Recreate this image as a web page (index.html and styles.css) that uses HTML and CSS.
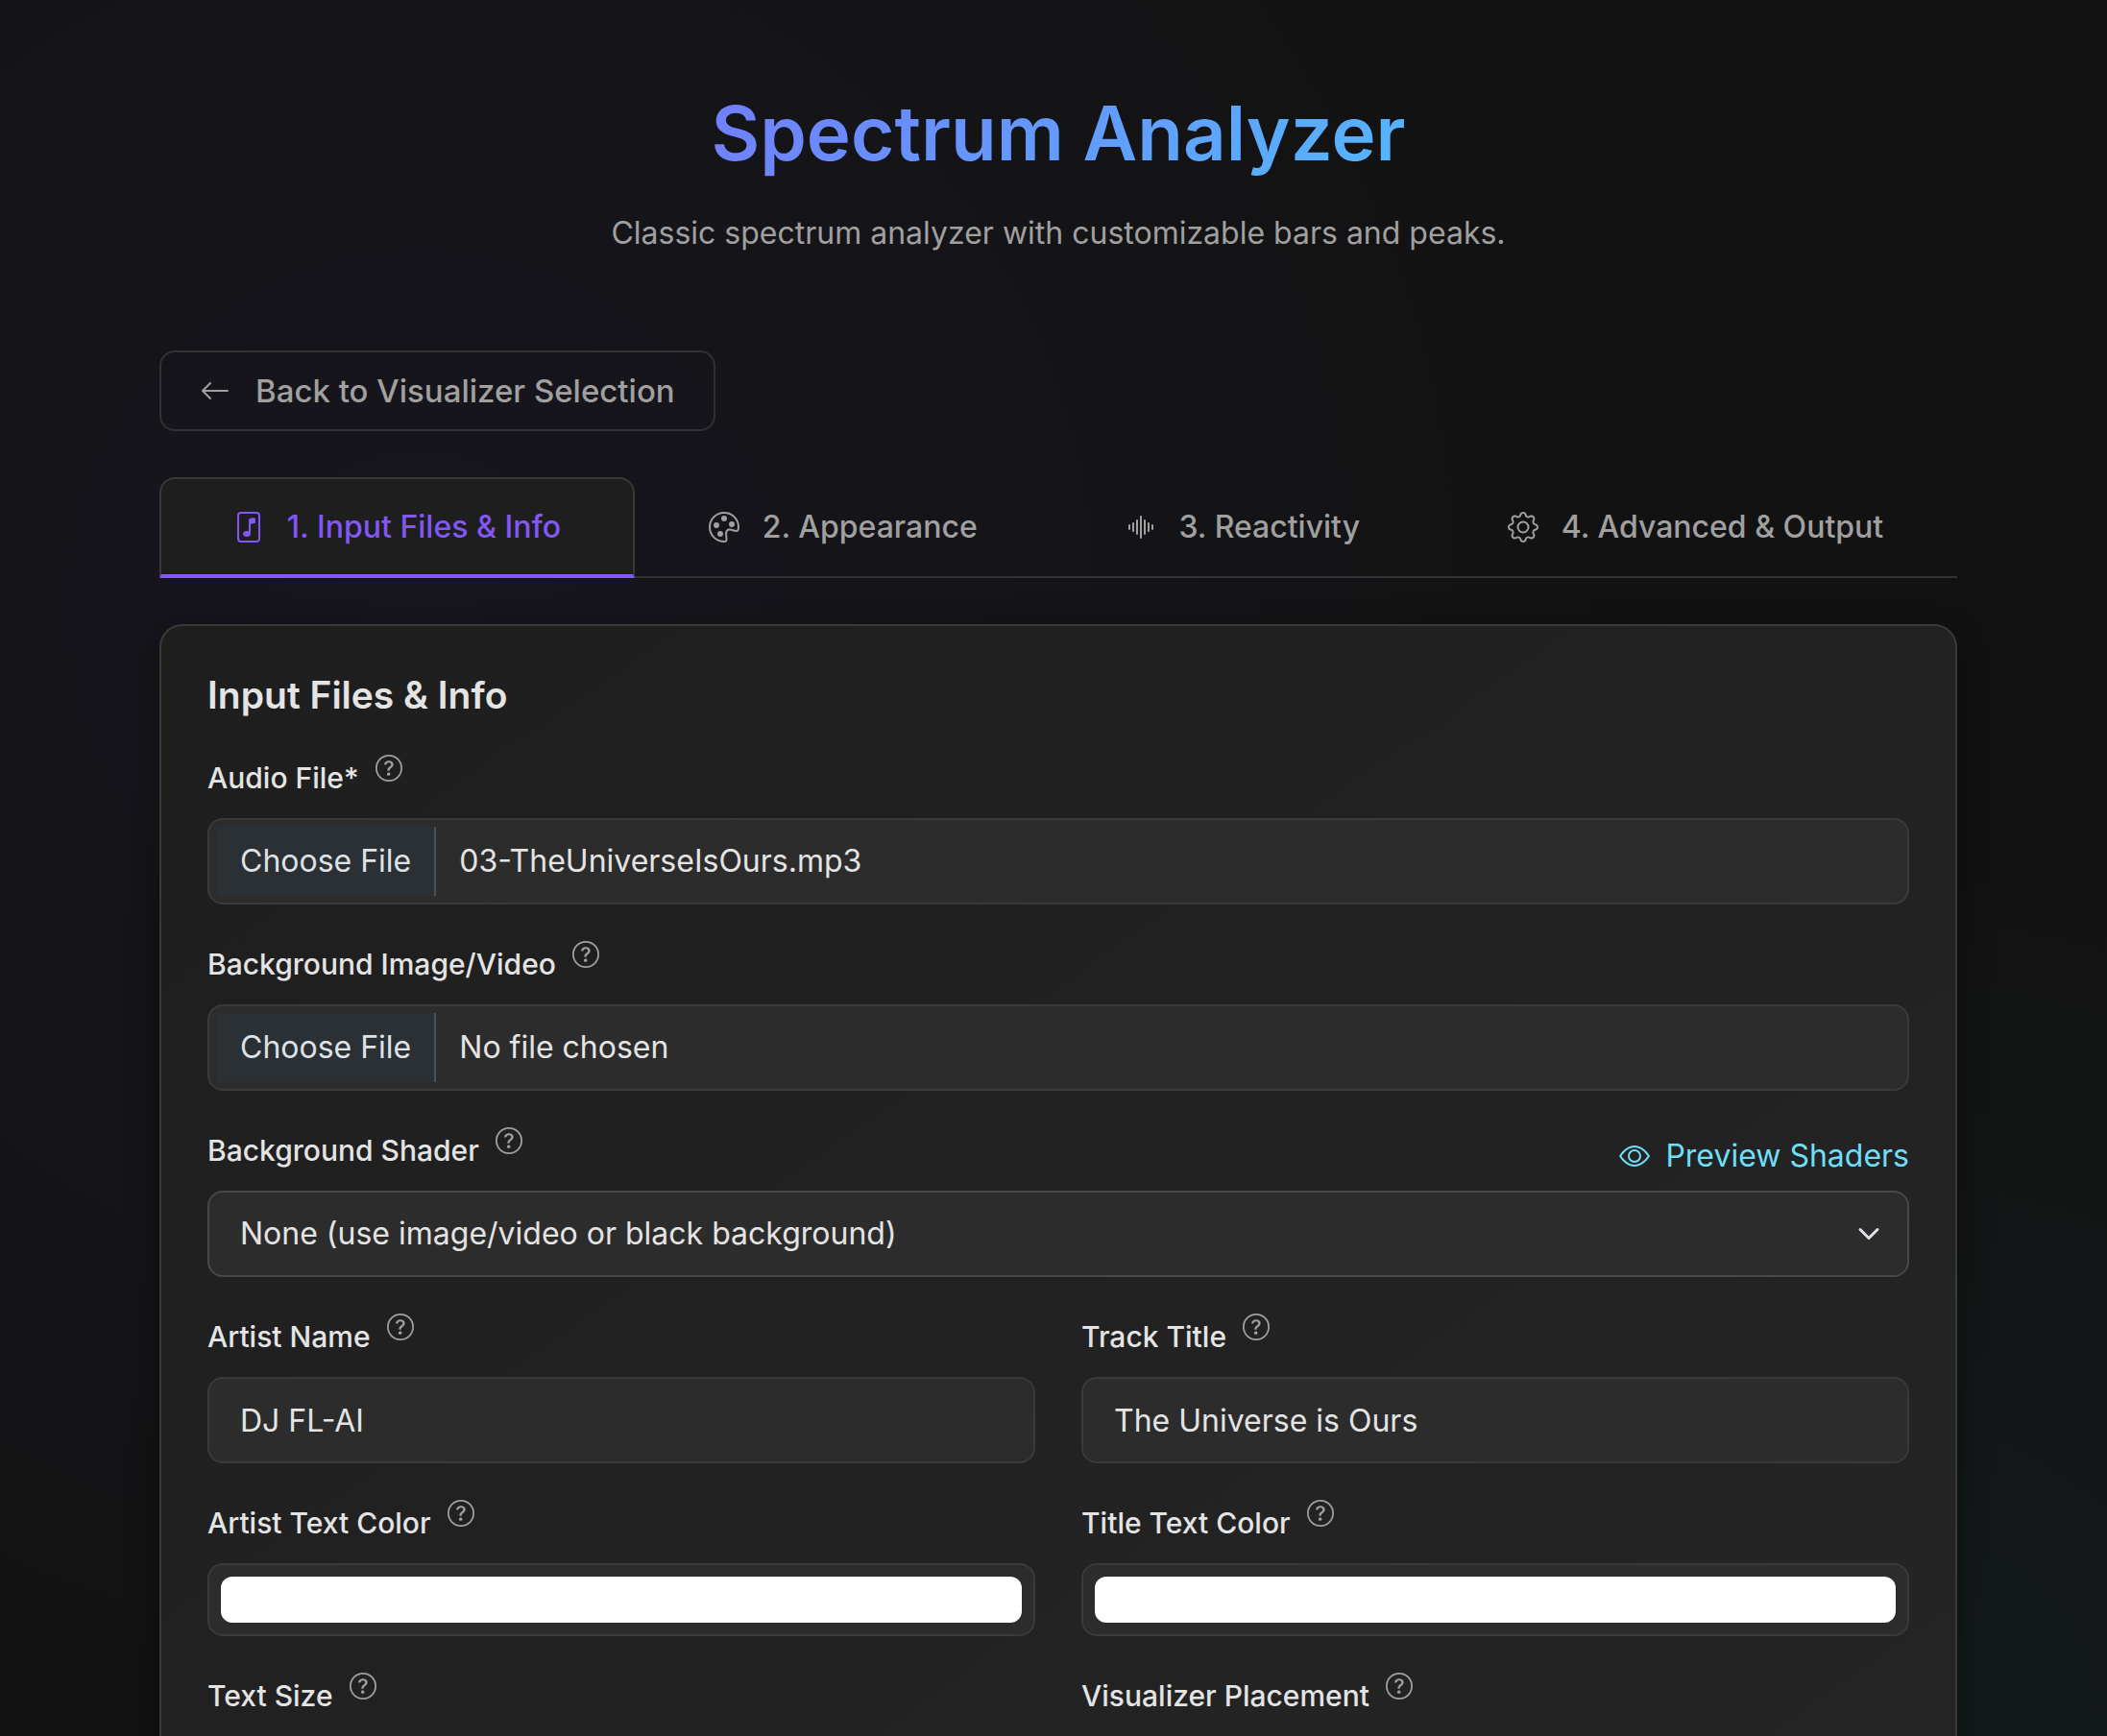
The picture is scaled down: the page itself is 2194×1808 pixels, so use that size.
FILE: index.html
```html
<!DOCTYPE html>
<html lang="en">
<head>
  <meta charset="UTF-8">
  <meta name="viewport" content="width=device-width, initial-scale=1">
  <title>Spectrum Analyzer</title>
  <link rel="stylesheet" href="styles.css">
</head>
<body>
  <!-- Shared icon shapes -->
  <svg class="icon-defs" aria-hidden="true">
    <symbol id="icon-help" viewBox="0 0 16 16">
      <path d="M8 15A7 7 0 1 1 8 1a7 7 0 0 1 0 14m0 1A8 8 0 1 0 8 0a8 8 0 0 0 0 16"/>
      <path d="M5.255 5.786a.237.237 0 0 0 .241.247h.825c.138 0 .248-.113.266-.25.09-.656.54-1.134 1.342-1.134.686 0 1.314.343 1.314 1.168 0 .635-.374.927-.965 1.371-.673.489-1.206 1.06-1.168 1.987l.003.217a.25.25 0 0 0 .25.246h.811a.25.25 0 0 0 .25-.25v-.105c0-.718.273-.927 1.01-1.486.609-.463 1.244-.977 1.244-2.056 0-1.511-1.276-2.241-2.673-2.241-1.267 0-2.655.59-2.75 2.286m1.557 5.763c0 .533.425.927 1.01.927.609 0 1.028-.394 1.028-.927 0-.552-.42-.94-1.029-.94-.584 0-1.009.388-1.009.94"/>
    </symbol>
  </svg>

  <div class="container">
    <header class="page-header">
      <h1>Spectrum Analyzer</h1>
      <p>Classic spectrum analyzer with customizable bars and peaks.</p>
    </header>

    <a href="#" class="back-button">
      <svg class="icon" viewBox="0 0 16 16"><path d="M15 8a.5.5 0 0 0-.5-.5H2.707l3.147-3.146a.5.5 0 1 0-.708-.708l-4 4a.5.5 0 0 0 0 .708l4 4a.5.5 0 0 0 .708-.708L2.707 8.5H14.5A.5.5 0 0 0 15 8"/></svg>
      Back to Visualizer Selection
    </a>

    <div class="tabs" role="tablist">
      <button type="button" class="tab active" role="tab" aria-selected="true">
        <svg class="icon" viewBox="0 0 16 16">
          <path d="M10.304 3.13a1 1 0 0 1 1.196.98v1.8l-2.5.5v5.09c0 .495-.301.883-.662 1.123C7.974 12.866 7.499 13 7 13s-.974-.134-1.338-.377C5.302 12.383 5 11.995 5 11.5s.301-.883.662-1.123C6.026 10.134 6.501 10 7 10c.356 0 .7.068 1 .196V4.41a1 1 0 0 1 .804-.98z"/>
          <path d="M4 0a2 2 0 0 0-2 2v12a2 2 0 0 0 2 2h8a2 2 0 0 0 2-2V2a2 2 0 0 0-2-2zm0 1h8a1 1 0 0 1 1 1v12a1 1 0 0 1-1 1H4a1 1 0 0 1-1-1V2a1 1 0 0 1 1-1"/>
        </svg>
        1. Input Files &amp; Info
      </button>
      <button type="button" class="tab" role="tab" aria-selected="false">
        <svg class="icon" viewBox="0 0 16 16">
          <path d="M8 5a1.5 1.5 0 1 0 0-3 1.5 1.5 0 0 0 0 3m4 3a1.5 1.5 0 1 0 0-3 1.5 1.5 0 0 0 0 3M5.5 7a1.5 1.5 0 1 1-3 0 1.5 1.5 0 0 1 3 0m.5 6a1.5 1.5 0 1 0 0-3 1.5 1.5 0 0 0 0 3"/>
          <path d="M16 8c0 3.15-1.866 2.585-3.567 2.07C11.42 9.763 10.465 9.473 10 10c-.603.683-.475 1.819-.351 2.92C9.826 14.495 9.996 16 8 16a8 8 0 1 1 8-8m-8 7c.611 0 .654-.171.655-.176.078-.146.124-.464.07-1.119-.014-.168-.037-.37-.061-.591-.052-.464-.112-1.005-.118-1.462-.01-.707.083-1.61.704-2.314.369-.417.845-.578 1.272-.618.404-.038.812.026 1.16.104.343.077.702.186 1.025.284l.028.008c.346.105.658.199.953.266.653.148.904.083.991.024C14.717 9.38 15 9.161 15 8a7 7 0 1 0-7 7"/>
        </svg>
        2. Appearance
      </button>
      <button type="button" class="tab" role="tab" aria-selected="false">
        <svg class="icon" viewBox="0 0 16 16"><path d="M8.5 2a.5.5 0 0 1 .5.5v11a.5.5 0 0 1-1 0v-11a.5.5 0 0 1 .5-.5m-2 2a.5.5 0 0 1 .5.5v7a.5.5 0 0 1-1 0v-7a.5.5 0 0 1 .5-.5m4 0a.5.5 0 0 1 .5.5v7a.5.5 0 0 1-1 0v-7a.5.5 0 0 1 .5-.5m-6 1.5A.5.5 0 0 1 5 6v4a.5.5 0 0 1-1 0V6a.5.5 0 0 1 .5-.5m8 0a.5.5 0 0 1 .5.5v4a.5.5 0 0 1-1 0V6a.5.5 0 0 1 .5-.5m-10 1A.5.5 0 0 1 3 7v2a.5.5 0 0 1-1 0V7a.5.5 0 0 1 .5-.5m12 0a.5.5 0 0 1 .5.5v2a.5.5 0 0 1-1 0V7a.5.5 0 0 1 .5-.5"/></svg>
        3. Reactivity
      </button>
      <button type="button" class="tab" role="tab" aria-selected="false">
        <svg class="icon" viewBox="0 0 16 16">
          <path d="M8 4.754a3.246 3.246 0 1 0 0 6.492 3.246 3.246 0 0 0 0-6.492M5.754 8a2.246 2.246 0 1 1 4.492 0 2.246 2.246 0 0 1-4.492 0"/>
          <path d="M9.796 1.343c-.527-1.79-3.065-1.79-3.592 0l-.094.319a.873.873 0 0 1-1.255.52l-.292-.16c-1.64-.892-3.433.902-2.54 2.541l.159.292a.873.873 0 0 1-.52 1.255l-.319.094c-1.79.527-1.79 3.065 0 3.592l.319.094a.873.873 0 0 1 .52 1.255l-.16.292c-.892 1.64.901 3.434 2.541 2.54l.292-.159a.873.873 0 0 1 1.255.52l.094.319c.527 1.79 3.065 1.79 3.592 0l.094-.319a.873.873 0 0 1 1.255-.52l.292.16c1.64.893 3.434-.902 2.54-2.541l-.159-.292a.873.873 0 0 1 .52-1.255l.319-.094c1.79-.527 1.79-3.065 0-3.592l-.319-.094a.873.873 0 0 1-.52-1.255l.16-.292c.893-1.64-.902-3.433-2.541-2.54l-.292.159a.873.873 0 0 1-1.255-.52zm-2.633.283c.246-.835 1.428-.835 1.674 0l.094.319a1.873 1.873 0 0 0 2.693 1.115l.291-.16c.764-.415 1.6.42 1.184 1.185l-.159.292a1.873 1.873 0 0 0 1.116 2.692l.318.094c.835.246.835 1.428 0 1.674l-.319.094a1.873 1.873 0 0 0-1.115 2.693l.16.291c.415.764-.42 1.6-1.185 1.184l-.291-.159a1.873 1.873 0 0 0-2.693 1.116l-.094.318c-.246.835-1.428.835-1.674 0l-.094-.319a1.873 1.873 0 0 0-2.692-1.115l-.292.16c-.764.415-1.6-.42-1.184-1.185l.159-.291A1.873 1.873 0 0 0 1.945 8.93l-.319-.094c-.835-.246-.835-1.428 0-1.674l.319-.094A1.873 1.873 0 0 0 3.06 4.377l-.16-.292c-.415-.764.42-1.6 1.185-1.184l.292.159a1.873 1.873 0 0 0 2.692-1.115z"/>
        </svg>
        4. Advanced &amp; Output
      </button>
    </div>

    <form class="card">
      <h2>Input Files &amp; Info</h2>

      <div class="form-grid">
        <div class="field full">
          <label for="audio-file">Audio File* <svg class="help"><use href="#icon-help"/></svg></label>
          <input type="file" id="audio-file" class="control" accept="audio/*">
        </div>

        <div class="field full">
          <label for="background-file">Background Image/Video <svg class="help"><use href="#icon-help"/></svg></label>
          <input type="file" id="background-file" class="control" accept="image/*,video/*">
        </div>

        <div class="field full">
          <div class="label-row">
            <label for="background-shader">Background Shader <svg class="help"><use href="#icon-help"/></svg></label>
            <a href="#" class="preview-link">
              <svg class="icon" viewBox="0 0 16 16">
                <path d="M16 8s-3-5.5-8-5.5S0 8 0 8s3 5.5 8 5.5S16 8 16 8M1.173 8a13 13 0 0 1 1.66-2.043C4.12 4.668 5.88 3.5 8 3.5s3.879 1.168 5.168 2.457A13 13 0 0 1 14.828 8q-.086.13-.195.288c-.335.48-.83 1.12-1.465 1.755C11.879 11.332 10.119 12.5 8 12.5s-3.879-1.168-5.168-2.457A13 13 0 0 1 1.172 8z"/>
                <path d="M8 5.5a2.5 2.5 0 1 0 0 5 2.5 2.5 0 0 0 0-5M4.5 8a3.5 3.5 0 1 1 7 0 3.5 3.5 0 0 1-7 0"/>
              </svg>
              Preview Shaders
            </a>
          </div>
          <div class="select-wrap">
            <select id="background-shader" class="control">
              <option>None (use image/video or black background)</option>
            </select>
            <svg class="chevron" viewBox="0 0 16 16"><path d="m2 5 6 6 6-6"/></svg>
          </div>
        </div>

        <div class="field">
          <label for="artist-name">Artist Name <svg class="help"><use href="#icon-help"/></svg></label>
          <input type="text" id="artist-name" class="control" value="DJ FL-AI">
        </div>
        <div class="field">
          <label for="track-title">Track Title <svg class="help"><use href="#icon-help"/></svg></label>
          <input type="text" id="track-title" class="control" value="The Universe is Ours">
        </div>

        <div class="field">
          <label for="artist-color">Artist Text Color <svg class="help"><use href="#icon-help"/></svg></label>
          <input type="color" id="artist-color" class="control color" value="#ffffff">
        </div>
        <div class="field">
          <label for="title-color">Title Text Color <svg class="help"><use href="#icon-help"/></svg></label>
          <input type="color" id="title-color" class="control color" value="#ffffff">
        </div>

        <div class="field">
          <label for="text-size">Text Size <svg class="help"><use href="#icon-help"/></svg></label>
          <select id="text-size" class="control"></select>
        </div>
        <div class="field">
          <label for="placement">Visualizer Placement <svg class="help"><use href="#icon-help"/></svg></label>
          <select id="placement" class="control"></select>
        </div>
      </div>
    </form>
  </div>

  <script>
    const files = new DataTransfer();
    files.items.add(new File([''], '03-TheUniverseIsOurs.mp3', { type: 'audio/mpeg' }));
    document.getElementById('audio-file').files = files.files;
  </script>
</body>
</html>
```
FILE: styles.css
```css
* {
  box-sizing: border-box;
}
body {
  margin: 0;
  font-family: Inter, sans-serif;
  font-size: 32px;
  line-height: 48px;
  color: #e4e4e4;
  background:
    radial-gradient(circle at 20% 35%, rgba(130, 87, 250, 0.05), transparent 60%),
    radial-gradient(circle at 90% 100%, rgba(64, 223, 252, 0.04), transparent 35%),
    #121212;
}
.icon-defs {
  display: none;
}
/* The page scrolls inside the container */
.container {
  height: 100vh;
  padding: 91px 156px 0 166px;
  overflow-y: auto;
  scrollbar-width: none;
}
.page-header {
  text-align: center;
  margin-bottom: 98px;
}
h1 {
  margin: 0 0 32px;
  font-size: 78px;
  font-weight: 600;
  line-height: 96px;
  background: linear-gradient(135deg, #8655fa, #40dffc);
  -webkit-background-clip: text;
  background-clip: text;
  color: transparent;
}
.page-header p {
  margin: 0;
  color: #a0a0a0;
}
.icon {
  width: 32px;
  height: 32px;
  fill: currentColor;
}
.back-button {
  display: inline-flex;
  align-items: center;
  gap: 26px;
  padding: 16px 40px;
  border: 2px solid #323135;
  border-radius: 16px;
  color: #a0a0a0;
  font-size: 33px;
  font-weight: 500;
  text-decoration: none;
  vertical-align: top;
}

/* Tabs */
.tabs {
  display: flex;
  margin: 48px 0;
  border-bottom: 2px solid #323135;
}
.tab {
  flex: 1 1 auto;
  display: flex;
  align-items: center;
  justify-content: center;
  gap: 24px;
  margin-bottom: -2px;
  padding: 26px 0 25px;
  border: 2px solid transparent;
  border-bottom-width: 4px;
  border-radius: 16px 16px 0 0;
  background: none;
  color: #a0a0a0;
  font: inherit;
  font-weight: 500;
  cursor: pointer;
}
.tab.active {
  background: #1e1e1e;
  border-color: #383838;
  border-bottom-color: #8257f5;
  color: #8257f5;
}

/* Form card */
.card {
  padding: 48px;
  border: 2px solid #3a3a3a;
  border-radius: 24px;
  background: linear-gradient(145deg, #1e1e1e, #252525);
  box-shadow: 0 8px 32px rgba(0, 0, 0, 0.4);
}
h2 {
  margin: 0 0 38px;
  font-size: 39px;
  font-weight: 600;
  line-height: 48px;
}
.form-grid {
  display: grid;
  grid-template-columns: 1fr 1fr;
  gap: 38px 48px;
}
.full {
  grid-column: 1 / -1;
}
label {
  display: flex;
  align-items: flex-start;
  gap: 17px;
  margin-bottom: 18px;
  font-size: 30px;
  font-weight: 500;
}
.help {
  width: 28px;
  height: 28px;
  fill: #a0a0a0;
}
.label-row {
  display: flex;
  justify-content: space-between;
  height: 54px;
  margin-bottom: 12px;
}
.preview-link {
  display: flex;
  align-items: center;
  align-self: flex-end;
  gap: 16px;
  color: #6edff6;
  text-decoration: none;
}
.control {
  display: block;
  width: 100%;
  height: 90px;
  margin: 0;
  padding: 19px 32px;
  border: 2px solid #3a3a3a;
  border-radius: 16px;
  background: #2c2c2c;
  color: #e4e4e4;
  font: inherit;
}
input[type="file"] {
  padding: 7px 8px;
}
input[type="file"]::file-selector-button {
  margin: 0 24px 0 0;
  padding: 12px 24px;
  border: 0;
  border-right: 2px solid #495057;
  background: #2b3035;
  color: #dee2e6;
  font: inherit;
}
.select-wrap {
  display: grid;
  align-items: center;
}
.select-wrap > * {
  grid-area: 1 / 1;
}
select.control {
  appearance: none;
  border-color: #484848;
}
.chevron {
  justify-self: end;
  width: 24px;
  height: 24px;
  margin-right: 30px;
  fill: none;
  stroke: #dee2e6;
  stroke-width: 2;
  stroke-linecap: round;
  stroke-linejoin: round;
  pointer-events: none;
}
.color {
  height: 76px;
  padding: 12px;
}
.color::-webkit-color-swatch-wrapper {
  padding: 0;
}
.color::-webkit-color-swatch {
  border: 0;
  border-radius: 12px;
}
```
